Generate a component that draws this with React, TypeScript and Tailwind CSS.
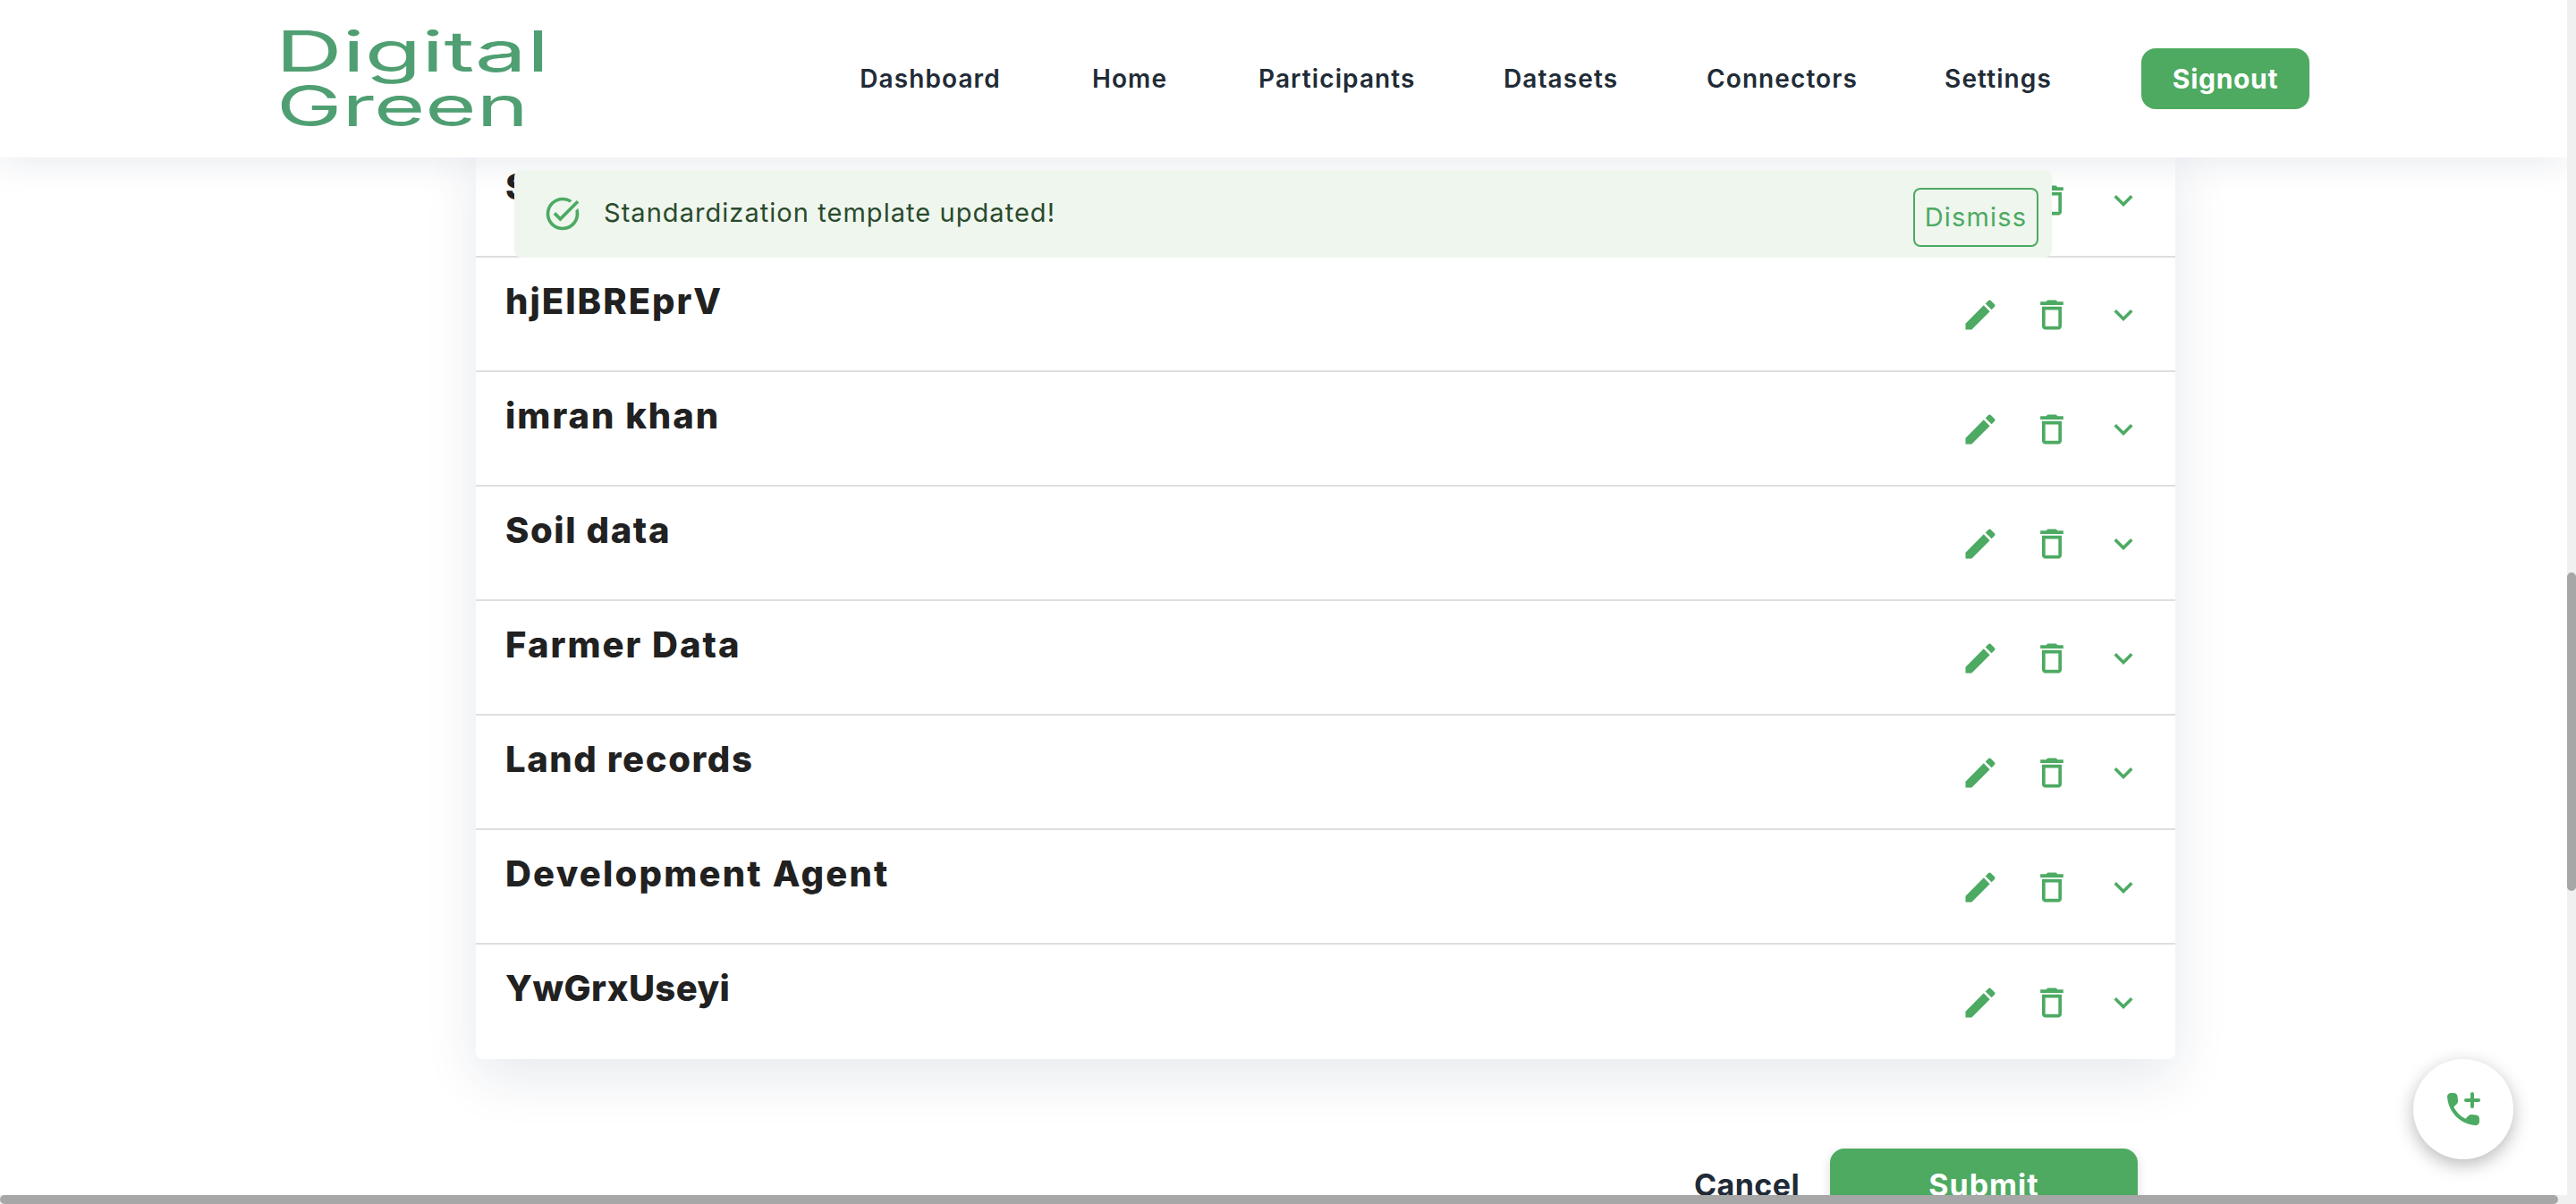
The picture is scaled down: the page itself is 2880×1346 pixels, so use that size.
import React from 'react';

const navItems = [
  { label: 'Dashboard', width: 'w-[158px]' },
  { label: 'Home', width: 'w-[88px]' },
  { label: 'Participants', width: 'w-[174px]' },
  { label: 'Datasets', width: 'w-[127px]' },
  { label: 'Connectors', width: 'w-[166px]' },
  { label: 'Settings', width: 'w-[120px]' },
];

const rows = [
  { name: 'Soil type', tracking: 'tracking-[2px]' },
  { name: 'hjEIBREprV', tracking: 'tracking-[2px]' },
  { name: 'imran khan', tracking: 'tracking-[2px]' },
  { name: 'Soil data', tracking: 'tracking-[1.6px]' },
  { name: 'Farmer Data', tracking: 'tracking-[2px]' },
  { name: 'Land records', tracking: 'tracking-[1.6px]' },
  { name: 'Development Agent', tracking: 'tracking-[2.2px]' },
  { name: 'YwGrxUseyi', tracking: 'tracking-[0.4px]' },
];

const font = { fontFamily: 'Inter, "Liberation Sans", sans-serif' };

const EditIcon = () => (
  <svg viewBox="0 0 24 24" className="w-[44px] h-[44px] fill-[#4caa62]">
    <path d="M3 17.25V21h3.75L17.81 9.94l-3.75-3.75L3 17.25zM20.71 7.04c.39-.39.39-1.02 0-1.41l-2.34-2.34a.9959.9959 0 0 0-1.41 0l-1.83 1.83 3.75 3.75 1.83-1.83z" />
  </svg>
);

const TrashIcon = () => (
  <svg viewBox="0 0 24 24" className="w-[44px] h-[44px] fill-[#4caa62]">
    <path d="M6 19c0 1.1.9 2 2 2h8c1.1 0 2-.9 2-2V7H6v12zM8 9h8v10H8V9zm7.5-5-1-1h-5l-1 1H5v2h14V4h-3.5z" />
  </svg>
);

const ChevronIcon = () => (
  <svg viewBox="0 0 24 24" className="w-[42px] h-[42px] fill-[#4caa62]">
    <path d="M16.59 8.59 12 13.17 7.41 8.59 6 10l6 6 6-6z" />
  </svg>
);

const Logo = () => (
  <svg viewBox="0 0 300 120" className="w-[300px] h-[120px] fill-[#4f9f72] overflow-visible" style={{ fontFamily: 'Inter, sans-serif' }}>
    <text x="-5" y="52" fontSize="63" fontWeight="400" textLength="306" lengthAdjust="spacingAndGlyphs">Digital</text>
    <text x="-4" y="113" fontSize="63" fontWeight="400" textLength="282" lengthAdjust="spacingAndGlyphs">Green</text>
  </svg>
);

const Row: React.FC<{ name: string; tracking: string }> = ({ name, tracking }) => (
  <div className="h-[128px] border-b-2 border-[#dedede] last:border-b-0 flex justify-between pl-[33px] pr-[18px]">
    <div className={`pt-[19px] text-[40px] leading-[60px] font-extrabold text-[#212121] ${tracking}`}>{name}</div>
    <div className="flex items-center pt-[1px]">
      <div className="w-[80px] flex justify-center"><EditIcon /></div>
      <div className="w-[80px] flex justify-center"><TrashIcon /></div>
      <div className="w-[80px] flex justify-center"><ChevronIcon /></div>
    </div>
  </div>
);

const App: React.FC = () => {
  return (
    <div className="relative h-screen w-full flex overflow-hidden bg-white" style={font}>
      <div className="flex-1 min-w-0 flex flex-col">
        <header className="relative z-10 h-[176px] shrink-0 bg-white flex items-center justify-between pl-[313px] pr-[288px] shadow-[0_4px_40px_rgba(20,40,80,0.1)]">
          <Logo />
          <nav className="flex items-center gap-[100px]">
            {navItems.map(item => (
              <a key={item.label} className={`text-center whitespace-nowrap text-[28px] font-semibold tracking-[1.1px] text-[#212b36] ${item.width}`}>{item.label}</a>
            ))}
            <button className="w-[188px] h-[68px] rounded-[16px] bg-[#4daa60] text-white text-[30px] font-bold tracking-[0.7px]">Signout</button>
          </nav>
        </header>

        <main className="flex-1 min-h-0 overflow-hidden -mt-[16px]">
          <div className="ml-[532px] w-[1900px] bg-white rounded-[8px] shadow-[0_20px_60px_rgba(20,40,80,0.1)]">
            {rows.map(row => <Row key={row.name} name={row.name} tracking={row.tracking} />)}
          </div>
          <div className="ml-[532px] w-[1858px] mt-[100px] flex justify-end items-center gap-[34px]">
            <button className="text-[34px] font-bold tracking-[0.4px] text-[#212b36]">Cancel</button>
            <button className="w-[344px] h-[80px] rounded-[16px] bg-[#4daa60] text-white text-[34px] font-bold tracking-[1px] shadow-[0_4px_12px_rgba(0,0,0,0.15)]">Submit</button>
          </div>
        </main>

        <div className="relative z-10 h-[10px] shrink-0 bg-[#f0f0f0]">
          <div className="h-full w-[2860px] rounded-full bg-[#a7a7a7]" />
        </div>
      </div>

      <div className="relative z-20 w-[10px] shrink-0 bg-[#f0f0f0] pt-[640px]">
        <div className="h-[356px] rounded-full bg-[#a7a7a7]" />
      </div>

      {/* snackbar over the first row */}
      <div className="absolute z-20 left-[575px] top-[190px] w-[1719px] h-[98px] rounded-[8px] bg-[#eff6ee] flex items-center justify-between pl-[32px] pr-[15px]">
        <div className="flex items-center gap-[24px]">
          <svg viewBox="0 0 24 24" className="w-[44px] h-[44px] fill-[#4caa62]">
            <path d="M22 5.18 10.59 16.6l-4.24-4.24 1.41-1.41 2.83 2.83 10-10L22 5.18zm-2.21 5.04c.13.57.21 1.17.21 1.78 0 4.42-3.58 8-8 8s-8-3.58-8-8 3.58-8 8-8c1.58 0 3.04.46 4.28 1.22l1.44-1.44C16.1 2.67 14.13 2 12 2 6.48 2 2 6.48 2 12s4.48 10 10 10 10-4.48 10-10c0-1.19-.22-2.33-.6-3.39l-1.61 1.61z" />
          </svg>
          <span className="text-[29px] font-normal tracking-[1.05px] text-[#2a4a2c] -translate-y-[1px]">Standardization template updated!</span>
        </div>
        <button className="w-[140px] h-[66px] mt-[8px] rounded-[8px] border-2 border-[#4caa62] text-[#4caa62] text-[29px] font-normal tracking-[1.2px]">Dismiss</button>
      </div>

      <button className="absolute z-20 left-[2698px] top-[1184px] w-[112px] h-[112px] rounded-full bg-white flex items-center justify-center shadow-[0_6px_20px_rgba(0,0,0,0.28)]">
        <svg viewBox="0 0 24 24" className="w-[48px] h-[48px] fill-[#4caa62]">
          <path d="M19.23 15.26l-2.54-.29c-.61-.07-1.21.14-1.64.57l-1.84 1.84c-2.83-1.44-5.15-3.75-6.59-6.59l1.85-1.85c.43-.43.64-1.03.57-1.64l-.29-2.52c-.12-1.01-.97-1.77-1.99-1.77H5.03c-1.13 0-2.07.94-2 2.07.53 8.54 7.36 15.36 15.89 15.89 1.13.07 2.07-.87 2.07-2v-1.73c.01-1.01-.75-1.86-1.76-1.98z" />
          <path d="M16 3.5c0-.55.45-1 1-1s1 .45 1 1V6h2.5c.55 0 1 .45 1 1s-.45 1-1 1H18v2.5c0 .55-.45 1-1 1s-1-.45-1-1V8h-2.5c-.55 0-1-.45-1-1s.45-1 1-1H16V3.5z" />
        </svg>
      </button>
    </div>
  );
};

export default App;
